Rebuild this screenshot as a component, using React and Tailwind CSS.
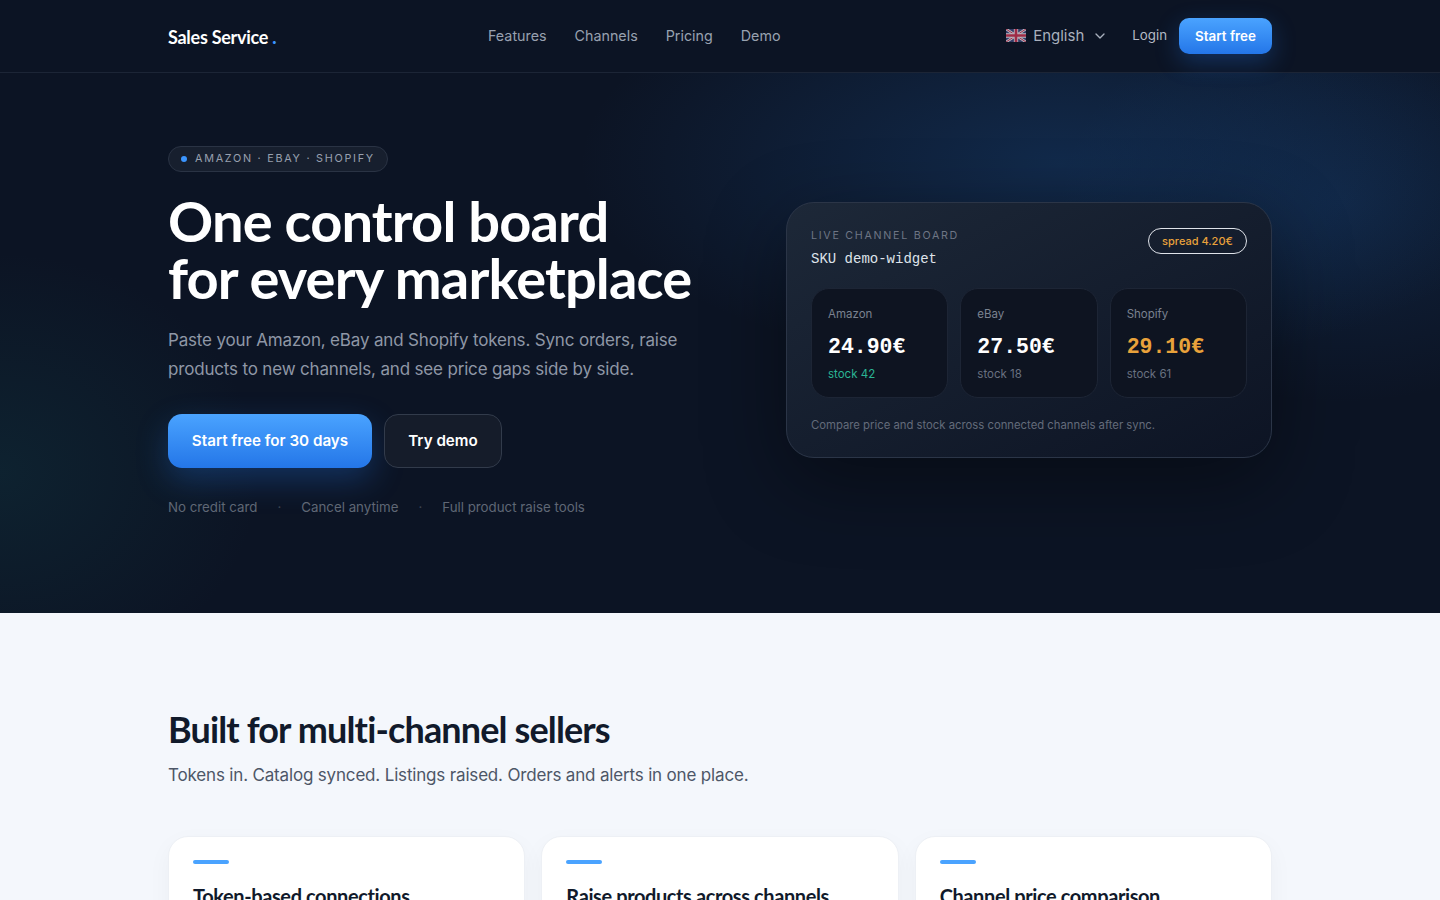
import { ChevronDown } from "lucide-react";

const channels = [
  { name: "Amazon", price: "24.90€", stock: "stock 42", priceClass: "text-white", stockClass: "text-[#2bb594]" },
  { name: "eBay", price: "27.50€", stock: "stock 18", priceClass: "text-white", stockClass: "text-[#697180]" },
  { name: "Shopify", price: "29.10€", stock: "stock 61", priceClass: "text-[#e9a23b]", stockClass: "text-[#697180]" },
];

const features = ["Token-based connections", "Raise products across channels", "Channel price comparison"];

const UkFlag = () => (
  <svg width="20" height="13" viewBox="0 0 60 39" className="opacity-80 -mt-[2px]">
    <rect width="60" height="39" fill="#3c4577" />
    <path d="M0 0L60 39M60 0L0 39" stroke="#e8e4ea" strokeWidth="8" />
    <path d="M0 0L60 39M60 0L0 39" stroke="#c4324f" strokeWidth="3" />
    <path d="M30 0V39M0 19.5H60" stroke="#e8e4ea" strokeWidth="13" />
    <path d="M30 0V39M0 19.5H60" stroke="#c4324f" strokeWidth="8" />
  </svg>
);

const Header = () => (
  <header className="h-[73px] bg-[#0c1424] border-b border-[#1c2536]">
    <div className="w-[1104px] mx-auto h-full grid grid-cols-[320px_1fr_auto] items-center">
      <div className="text-white text-[18px] font-bold tracking-[-0.015em] font-['Lato',sans-serif] pt-[2px]">
        Sales Service <span className="text-[#3b95ff] font-black">.</span>
      </div>
      <nav className="flex gap-7 text-[14.3px] text-[#98a1b0]">
        <a>Features</a>
        <a>Channels</a>
        <a>Pricing</a>
        <a>Demo</a>
      </nav>
      <div className="flex items-center">
        <UkFlag />
        <span className="ml-[7px] pt-[1px] text-[15px] text-[#a9b0bd]">English</span>
        <ChevronDown size={16} className="ml-2 text-[#a9b0bd]" />
        <a className="ml-6 text-[13.3px] text-[#b4bac5]">Login</a>
        <button className="ml-3 w-[93px] h-9 rounded-[10px] text-white text-[13.4px] font-semibold bg-gradient-to-b from-[#4aa3ff] to-[#2476e8] shadow-[0_8px_24px_rgba(36,118,232,0.3)]">
          Start free
        </button>
      </div>
    </div>
  </header>
);

const BoardCard = () => (
  <div className="w-[486px] h-[256px] self-start mt-[56px] justify-self-end rounded-[28px] border border-[#2b3547] p-6 bg-gradient-to-br from-[#1d2838] to-[#0d1424] shadow-[0_24px_80px_rgba(0,0,0,0.4)]">
    <div className="flex justify-between items-start">
      <div>
        <div className="text-[10.7px] leading-4 tracking-[0.16em] text-[#6e7685] pt-[1px]">LIVE CHANNEL BOARD</div>
        <div className="mt-[5px] text-[14px] leading-5 text-[#dfe3ea] font-['Liberation_Mono',monospace]">SKU demo-widget</div>
      </div>
      <div className="mt-[1px] h-[26px] w-[99px] rounded-full border border-[#dfe3ea] flex items-center justify-center text-[11px] font-medium text-[#e9a23b]">
        spread 4.20€
      </div>
    </div>
    <div className="mt-[19px] grid grid-cols-3 gap-3">
      {channels.map((item, index) => (
        <div key={index} className="h-[110px] rounded-[18px] border border-[#1d2535] bg-[#0e1421] px-4 pt-[17px]">
          <div className="text-[11.5px] leading-4 text-[#7a8290]">{item.name}</div>
          <div className={`mt-[11px] text-[21.5px] leading-7 font-bold font-['Liberation_Mono',monospace] ${item.priceClass}`}>{item.price}</div>
          <div className={`mt-[5px] text-[11.5px] leading-4 ${item.stockClass}`}>{item.stock}</div>
        </div>
      ))}
    </div>
    <div className="mt-[19px] text-[11.3px] leading-4 text-[#636b7a]">Compare price and stock across connected channels after sync.</div>
  </div>
);

const Hero = () => (
  <section className="h-[540px] pt-[73px] pb-[97px] bg-[#0c1424] bg-[radial-gradient(ellipse_480px_210px_at_1060px_90px,rgba(28,84,150,0.34),transparent),radial-gradient(ellipse_280px_200px_at_1340px_130px,rgba(28,84,150,0.22),transparent),radial-gradient(ellipse_260px_220px_at_0px_400px,rgba(20,84,90,0.22),transparent)]">
    <div className="w-[1104px] mx-auto h-full grid grid-cols-[1fr_486px] items-start">
      <div>
        <div className="flex w-fit items-center h-[26px] px-3 rounded-full border border-[#2a3344] bg-[#171f2e]">
          <span className="w-[6px] h-[6px] rounded-full bg-[#3b95ff]" />
          <span className="ml-2 text-[10.8px] tracking-[0.16em] text-[#98a0ae]">AMAZON · EBAY · SHOPIFY</span>
        </div>
        <h1 className="mt-[20px] text-[56px] leading-[57px] font-bold tracking-[-0.015em] text-white font-['Lato',sans-serif]">
          One control board
          <br />
          for every marketplace
        </h1>
        <p className="mt-[20px] text-[17px] leading-[29px] tracking-[-0.01em] text-[#8f97a6]">
          Paste your Amazon, eBay and Shopify tokens. Sync orders, raise
          <br />
          products to new channels, and see price gaps side by side.
        </p>
        <div className="mt-[30px] flex gap-3">
          <button className="w-[204px] h-[54px] rounded-[14px] text-white text-[15.2px] font-semibold bg-gradient-to-b from-[#4aa3ff] to-[#2476e8] shadow-[0_12px_32px_rgba(36,118,232,0.3)]">
            Start free for 30 days
          </button>
          <button className="w-[118px] h-[54px] rounded-[14px] text-white text-[15.2px] font-semibold border border-[#323b4b] bg-[#151c2a]">
            Try demo
          </button>
        </div>
        <div className="mt-[29px] flex items-center gap-[20px] text-[13.3px] leading-5 text-[#5f6775]">
          <span>No credit card</span>
          <span className="text-[#3a4250]">·</span>
          <span>Cancel anytime</span>
          <span className="text-[#3a4250]">·</span>
          <span>Full product raise tools</span>
        </div>
      </div>
      <BoardCard />
    </div>
  </section>
);

const Features = () => (
  <section className="bg-[#f4f7fc] pt-[95px]">
    <div className="w-[1104px] mx-auto">
      <h2 className="text-[36px] leading-[42px] font-bold tracking-[-0.024em] text-[#111a2b] font-['Lato',sans-serif]">
        Built for multi-channel sellers
      </h2>
      <p className="mt-[11px] text-[17px] leading-7 tracking-[-0.01em] text-[#4d5667]">
        Tokens in. Catalog synced. Listings raised. Orders and alerts in one place.
      </p>
      <div className="mt-[47px] grid grid-cols-3 gap-4">
        {features.map((title, index) => (
          <div key={index} className="h-[200px] rounded-[20px] bg-white border border-[#edf0f5] px-6 pt-[23px] shadow-[0_8px_24px_rgba(17,26,43,0.04)]">
            <div className="w-9 h-1 rounded-full bg-[#4aa3ff]" />
            <h3 className="mt-[18px] text-[20px] leading-7 font-bold tracking-[-0.02em] text-[#111a2b] font-['Lato',sans-serif]">{title}</h3>
          </div>
        ))}
      </div>
    </div>
  </section>
);

const App = () => {
  return (
    <div className="h-screen overflow-hidden font-['Inter',sans-serif]">
      <Header />
      <Hero />
      <Features />
    </div>
  );
};

export default App;
